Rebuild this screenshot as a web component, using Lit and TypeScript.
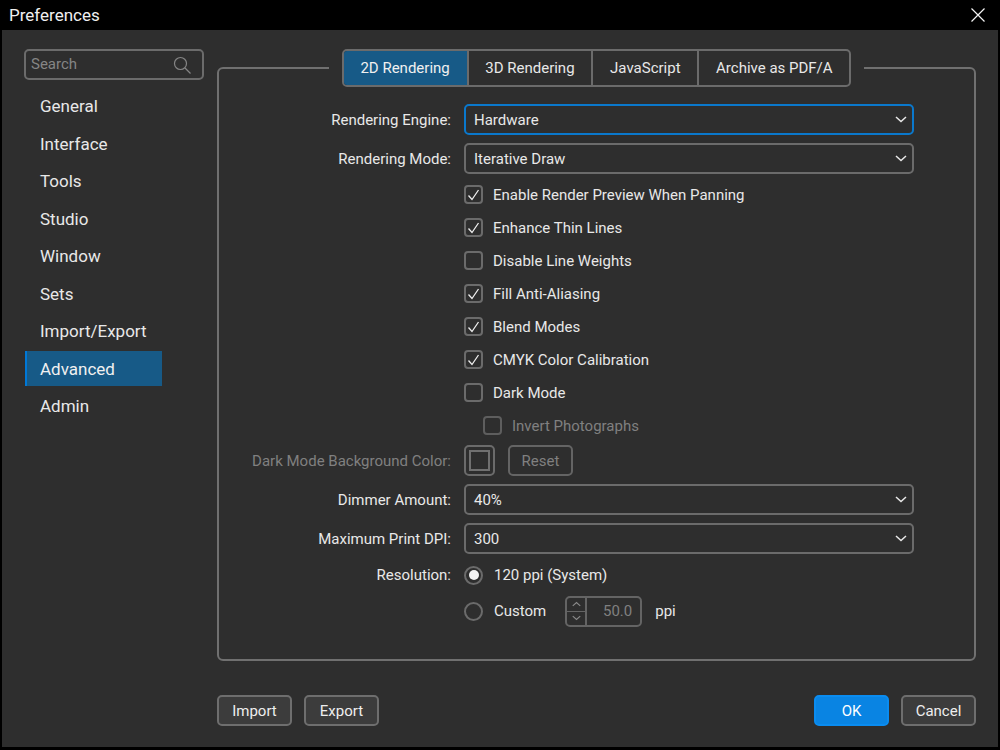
import { LitElement, html, css, svg } from 'lit';
import { customElement } from 'lit/decorators.js';

const chevron = (up = false) => svg`<path d=${up ? 'M1 6 L6 1.5 L11 6' : 'M1 1 L6 5.5 L11 1'} fill="none" stroke="currentColor" stroke-width="1.5"/>`;

@customElement('app-root')
export class AppRoot extends LitElement {
  static override styles = css`
    :host {
      display: flex;
      flex-direction: column;
      width: 1000px;
      height: 750px;
      background: #000;
      font-family: Roboto, sans-serif;
      font-size: 15px;
      color: #e8e8e8;
      box-sizing: border-box;
      overflow: hidden;
    }

    * {
      box-sizing: border-box;
    }

    .titlebar {
      height: 30px;
      flex: none;
      display: flex;
      align-items: center;
      justify-content: space-between;
      padding: 0 15px 0 9px;
      font-size: 17px;
      color: #f0f0f0;
    }

    .titlebar svg {
      display: block;
    }

    .body {
      flex: 1;
      margin: 0 2px 3px 2px;
      background: #2e2e2e;
      display: flex;
      padding: 19px 22px 0 22px;
    }

    .sidebar {
      width: 193px;
      flex: none;
    }

    .search {
      width: 180px;
      height: 31px;
      border: 2px solid #6b6b6b;
      border-radius: 5px;
      display: flex;
      align-items: center;
      justify-content: space-between;
      padding: 0 11px 2px 5px;
      color: #858585;
      margin-bottom: 7.5px;
    }

    .search svg {
      margin-top: 2px;
    }

    .nav-item {
      display: flex;
      align-items: center;
      height: 37.5px;
      width: 137px;
      margin-left: 1px;
      padding-left: 15px;
      font-size: 17px;
      color: #e8e8e8;
    }

    .nav-item.active {
      background: #175a87;
      border-left: 2px solid #0078d7;
      padding-left: 13px;
      height: 35px;
      margin: 1.25px 0 1.25px 1px;
      color: #f0f0f0;
    }

    .main {
      flex: 1;
      min-width: 0;
      display: flex;
      flex-direction: column;
    }

    fieldset {
      margin: 0;
      padding: 0;
      height: 612px;
      border: 2px solid #707070;
      border-radius: 6px;
      min-width: 0;
    }

    legend {
      margin: 0 auto;
      padding: 0 13px;
      display: block;
    }

    .tabs {
      display: flex;
      height: 38px;
      border: 2px solid #6b6b6b;
      border-radius: 5px;
      overflow: hidden;
    }

    .tab {
      display: flex;
      align-items: center;
      padding: 0 16.75px;
      border-left: 2px solid #6b6b6b;
      color: #e8e8e8;
    }

    .tab:first-child {
      border-left: none;
    }

    .tab.active {
      background: #175a87;
      color: #f0f0f0;
    }

    .form {
      display: grid;
      grid-template-columns: 232px 450px;
      column-gap: 13px;
      margin-top: 17px;
      align-items: center;
    }

    .label {
      text-align: right;
    }

    .disabled {
      color: #808080;
    }

    .select {
      height: 31px;
      border: 2px solid #6b6b6b;
      border-radius: 5px;
      display: flex;
      align-items: center;
      justify-content: space-between;
      padding: 0 5px 0 8px;
    }

    .select.focus {
      border-color: #0a78cc;
    }

    .select svg {
      color: #e8e8e8;
    }

    .gap {
      margin-bottom: 8px;
    }

    .gap-checks {
      margin-bottom: 4px;
    }

    .gap-dark {
      margin-top: 3px;
    }

    .gap-print {
      margin-bottom: 3px;
    }

    .check-row {
      grid-column: 2;
      display: flex;
      align-items: center;
      height: 33px;
      gap: 10px;
    }

    .check-row.sub {
      padding-left: 19px;
    }

    .check {
      width: 19px;
      height: 19px;
      border: 2px solid #6b6b6b;
      border-radius: 4px;
      display: flex;
      align-items: center;
      justify-content: center;
      flex: none;
    }

    .check-row.sub .check {
      border-color: #5e5e5e;
    }

    .color-row {
      display: flex;
      align-items: center;
      gap: 13px;
    }

    .swatch {
      width: 31px;
      height: 31px;
      border: 2px solid #6b6b6b;
      border-radius: 5px;
      display: flex;
      align-items: center;
      justify-content: center;
    }

    .swatch span {
      width: 21px;
      height: 21px;
      border: 2px solid #707070;
    }

    .reset {
      width: 65px;
      height: 31px;
      border: 2px solid #646464;
      border-radius: 5px;
      display: flex;
      align-items: center;
      justify-content: center;
      color: #808080;
    }

    .radio-row {
      grid-column: 2;
      display: flex;
      align-items: center;
      height: 36px;
    }

    .radio {
      width: 19px;
      height: 19px;
      border: 2px solid #6b6b6b;
      border-radius: 50%;
      margin-right: 11px;
      flex: none;
      display: flex;
      align-items: center;
      justify-content: center;
    }

    .radio i {
      width: 10px;
      height: 10px;
      border-radius: 50%;
      background: #f4f4f4;
    }

    .spinner {
      display: flex;
      width: 77px;
      height: 31px;
      margin: 0 13px 0 19px;
      border: 2px solid #646464;
      border-radius: 5px;
    }

    .arrows {
      width: 20px;
      display: flex;
      flex-direction: column;
      border-right: 2px solid #646464;
      color: #8a8a8a;
    }

    .arrows span {
      flex: 1;
      display: flex;
      align-items: center;
      justify-content: center;
    }

    .arrows span + span {
      border-top: 1px solid #646464;
    }

    .value {
      flex: 1;
      text-align: right;
      line-height: 27px;
      padding-right: 8px;
      color: #808080;
    }

    .footer {
      display: flex;
      gap: 12px;
      margin-top: 34px;
    }

    .btn {
      width: 75px;
      height: 31px;
      border: 2px solid #6e6e6e;
      border-radius: 5px;
      background: #3c3c3c;
      display: flex;
      align-items: center;
      justify-content: center;
      color: #eee;
    }

    .btn.primary {
      background: #0984e3;
      border-color: #0a8cf0;
      margin-left: auto;
      color: #fff;
    }
  `;

  private selectBox(value: string, cls = '') {
    return html`<div class="select ${cls}">
      <span>${value}</span>
      <svg width="12" height="7" viewBox="0 0 12 7">${chevron()}</svg>
    </div>`;
  }

  private checkRow(label: string, checked: boolean) {
    return html`<div class="check-row">
      <span class="check">
        ${checked
          ? html`<svg width="13" height="12" viewBox="0 0 13 12"><path d="M1.5 6.5 L5 10.5 L11.5 1" fill="none" stroke="#eee" stroke-width="1.3"/></svg>`
          : ''}
      </span>
      <span>${label}</span>
    </div>`;
  }

  override render() {
    const nav = ['General', 'Interface', 'Tools', 'Studio', 'Window', 'Sets', 'Import/Export', 'Advanced', 'Admin'];
    const tabs = ['2D Rendering', '3D Rendering', 'JavaScript', 'Archive as PDF/A'];
    const checks: [string, boolean][] = [
      ['Enable Render Preview When Panning', true],
      ['Enhance Thin Lines', true],
      ['Disable Line Weights', false],
      ['Fill Anti-Aliasing', true],
      ['Blend Modes', true],
      ['CMYK Color Calibration', true],
      ['Dark Mode', false],
    ];

    return html`
      <div class="titlebar">
        <span>Preferences</span>
        <svg width="14" height="14" viewBox="0 0 14 14"><path d="M0.5 0.5 L13.5 13.5 M13.5 0.5 L0.5 13.5" stroke="#f4f4f4" stroke-width="1.2"/></svg>
      </div>
      <div class="body">
        <div class="sidebar">
          <div class="search">
            <span>Search</span>
            <svg width="18" height="18" viewBox="0 0 18 18"><circle cx="7.5" cy="7.5" r="6" fill="none" stroke="#858585" stroke-width="1.2"/><path d="M12 12 L17.5 17.5" stroke="#858585" stroke-width="1.2"/></svg>
          </div>
          ${nav.map((n) => html`<div class="nav-item ${n === 'Advanced' ? 'active' : ''}">${n}</div>`)}
        </div>
        <div class="main">
          <fieldset>
            <legend>
              <div class="tabs">
                ${tabs.map((t, i) => html`<div class="tab ${i === 0 ? 'active' : ''}">${t}</div>`)}
              </div>
            </legend>
            <div class="form">
              <div class="label gap">Rendering Engine:</div>
              <div class="gap">${this.selectBox('Hardware', 'focus')}</div>
              <div class="label gap-checks">Rendering Mode:</div>
              <div class="gap-checks">${this.selectBox('Iterative Draw')}</div>
              ${checks.map(([l, c]) => this.checkRow(l, c))}
              <div class="check-row sub disabled">
                <span class="check"></span>
                <span>Invert Photographs</span>
              </div>
              <div class="label disabled gap gap-dark">Dark Mode Background Color:</div>
              <div class="color-row gap gap-dark">
                <div class="swatch"><span></span></div>
                <div class="reset">Reset</div>
              </div>
              <div class="label gap">Dimmer Amount:</div>
              <div class="gap">${this.selectBox('40%')}</div>
              <div class="label gap-print">Maximum Print DPI:</div>
              <div class="gap-print">${this.selectBox('300')}</div>
              <div class="label">Resolution:</div>
              <div class="radio-row">
                <span class="radio"><i></i></span>
                <span>120 ppi (System)</span>
              </div>
              <div class="radio-row">
                <span class="radio"></span>
                <span>Custom</span>
                <div class="spinner">
                  <div class="arrows">
                    <span><svg width="9" height="6" viewBox="0 0 12 7">${chevron(true)}</svg></span>
                    <span><svg width="9" height="6" viewBox="0 0 12 7">${chevron()}</svg></span>
                  </div>
                  <div class="value">50.0</div>
                </div>
                <span>ppi</span>
              </div>
            </div>
          </fieldset>
          <div class="footer">
            <div class="btn">Import</div>
            <div class="btn">Export</div>
            <div class="btn primary">OK</div>
            <div class="btn">Cancel</div>
          </div>
        </div>
      </div>
    `;
  }
}
